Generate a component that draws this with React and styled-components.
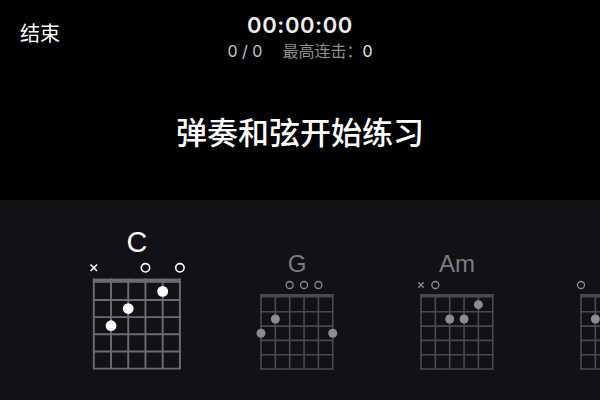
import React from "react";
import styled, { createGlobalStyle } from "styled-components";

const STRING_GAP = 14.35;
const FRET_GAP = 14.3;
const NUT = 3.5;
const FRETS = 5;

const chords = [
  { name: "C", frets: ["x", 3, 2, 0, 1, 0] },
  { name: "G", frets: [3, 2, 0, 0, 0, 3] },
  { name: "Am", frets: ["x", 0, 2, 2, 1, null] },
  { name: "E", frets: [0, 2, 2, 1, 0, 0] }
];

const GlobalStyle = createGlobalStyle`
  html, body {
    margin: 0;
    padding: 0;
    background: #000;
  }
  body {
    width: 600px;
    height: 400px;
    overflow: hidden;
    font-family: "Inter", "Noto Sans CJK SC", sans-serif;
  }
`;

const Screen = styled.div`
  width: 600px;
  height: 400px;
  display: flex;
  flex-direction: column;
  overflow: hidden;
`;

const TopArea = styled.div`
  height: 200px;
  background: #000;
  display: flex;
  flex-direction: column;
`;

const Header = styled.div`
  display: grid;
  grid-template-columns: 1fr auto 1fr;
  padding-top: 12px;
`;

const EndButton = styled.div`
  padding: 7px 0 0 20px;
  font-family: "Noto Sans CJK SC", sans-serif;
  font-size: 20px;
  line-height: 28px;
  color: #fff;
`;

const Center = styled.div`
  display: flex;
  flex-direction: column;
  align-items: center;
`;

const Timer = styled.div`
  font-family: "Inter", sans-serif;
  font-weight: 600;
  font-size: 22px;
  line-height: 26px;
  letter-spacing: 0.6px;
  color: #eee;
`;

const Stats = styled.div`
  margin-top: 3px;
  display: flex;
  gap: 20px;
  font-size: 16px;
  line-height: 21px;
`;

const Score = styled.span`
  color: #c4c4c4;
`;

const Combo = styled.span`
  color: #8e8e8e;
`;

const ComboValue = styled.span`
  color: #e8e8e8;
`;

const TitleArea = styled.div`
  flex: 1;
  display: flex;
  align-items: center;
  justify-content: center;
`;

const Title = styled.h1`
  margin: 0;
  font-family: "Noto Sans CJK SC", sans-serif;
  font-weight: 500;
  font-size: 31px;
  line-height: 40px;
  color: #fff;
`;

const ChordPanel = styled.div`
  height: 200px;
  background: #121116;
  display: flex;
  align-items: flex-end;
  padding: 0 0 29px 57px;
  box-sizing: border-box;
  overflow: hidden;
`;

const ChordCard = styled.div`
  flex: 0 0 160px;
  display: flex;
  flex-direction: column;
  align-items: center;
  transform: scale(${(p) => (p.$active ? 1.2 : 1)});
  transform-origin: 50% 100%;
`;

const ChordName = styled.div`
  font-family: "Liberation Sans", sans-serif;
  font-size: 24px;
  line-height: 28px;
  color: ${(p) => (p.$active ? "#fff" : "#7c7c7e")};
`;

const Diagram = styled.svg`
  display: block;
  width: 88px;
  height: 93px;
`;

function ChordDiagram({ frets, active }) {
  const line = active ? "#6c6c70" : "#4a4a4e";
  const mark = active ? "#fff" : "#8c8c8e";
  const width = STRING_GAP * 5;
  const height = NUT + FRET_GAP * FRETS;

  return (
    <Diagram viewBox="-8 -16 88 93">
      <rect x={-0.8} y={0} width={width + 1.6} height={NUT} fill={line} />
      {Array.from({ length: 6 }, (_, i) => (
        <line
          key={`s${i}`}
          x1={i * STRING_GAP}
          x2={i * STRING_GAP}
          y1={0}
          y2={height}
          stroke={line}
          strokeWidth={1.6}
        />
      ))}
      {Array.from({ length: FRETS }, (_, i) => (
        <line
          key={`f${i}`}
          x1={-0.8}
          x2={width + 0.8}
          y1={NUT + (i + 1) * FRET_GAP}
          y2={NUT + (i + 1) * FRET_GAP}
          stroke={line}
          strokeWidth={1.6}
        />
      ))}
      {frets.map((f, i) => {
        const x = i * STRING_GAP;
        if (f === "x") {
          return (
            <g key={`m${i}`} stroke={mark} strokeWidth={1.3}>
              <line x1={x - 2.7} y1={-11.7} x2={x + 2.7} y2={-6.3} />
              <line x1={x + 2.7} y1={-11.7} x2={x - 2.7} y2={-6.3} />
            </g>
          );
        }
        if (f === 0) {
          return (
            <circle key={`m${i}`} cx={x} cy={-9} r={3.5} fill="none" stroke={mark} strokeWidth={1.3} />
          );
        }
        if (typeof f === "number") {
          return (
            <circle key={`d${i}`} cx={x} cy={NUT + (f - 0.5) * FRET_GAP} r={4.5} fill={mark} />
          );
        }
        return null;
      })}
    </Diagram>
  );
}

export default function App() {
  return (
    <Screen>
      <GlobalStyle />
      <TopArea>
        <Header>
          <EndButton>结束</EndButton>
          <Center>
            <Timer>00:00:00</Timer>
            <Stats>
              <Score>0 / 0</Score>
              <Combo>
                最高连击：<ComboValue>0</ComboValue>
              </Combo>
            </Stats>
          </Center>
          <div />
        </Header>
        <TitleArea>
          <Title>弹奏和弦开始练习</Title>
        </TitleArea>
      </TopArea>
      <ChordPanel>
        {chords.map((c, i) => (
          <ChordCard key={c.name} $active={i === 0}>
            <ChordName $active={i === 0}>{c.name}</ChordName>
            <ChordDiagram frets={c.frets} active={i === 0} />
          </ChordCard>
        ))}
      </ChordPanel>
    </Screen>
  );
}
